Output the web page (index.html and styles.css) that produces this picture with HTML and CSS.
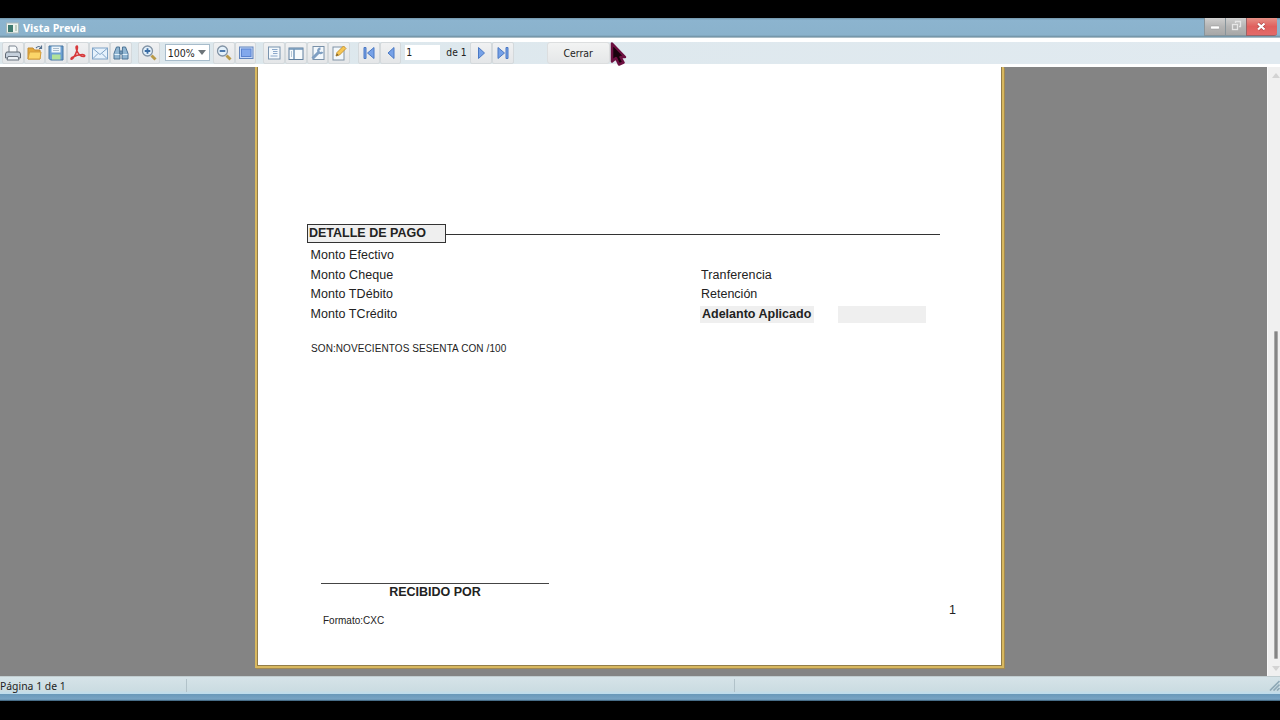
FILE: index.html
```html
<!DOCTYPE html>
<html lang="es">
<head>
    <meta charset="UTF-8">
    <meta name="viewport" content="width=device-width, initial-scale=1.0">
    <link rel="stylesheet" href="styles.css">
    <title>Vista Previa</title>
</head>
<body>
    <div class="window">
        <div class="titlebar">
            <svg class="app-icon" width="13" height="12" viewBox="0 0 13 12">
                <rect x="0.5" y="1" width="12" height="10" fill="#eef3ee" stroke="#a9b9bb"/>
                <rect x="2" y="3" width="5" height="7" fill="#3f7b70"/>
                <path d="M9 4h2M9 6h2M9 8h2" stroke="#8fae97"/>
            </svg>
            <span class="title">Vista Previa</span>
            <div class="controls">
                <div class="control"><svg width="20" height="17"><rect x="5.500" y="8" width="9" height="3" rx="1" fill="#fff" stroke="#8e8e8e" stroke-width=".5"/></svg></div>
                <div class="control"><svg width="20" height="17" fill="none" stroke="#e6e6e6" stroke-width="1.300"><path d="M9.500 5V3.500h5v5H13"/><rect x="6.500" y="6.500" width="5" height="5"/></svg></div>
                <div class="control close"><svg width="30" height="17"><path d="M11 5.500l6.500 6M17.500 5.500l-6.500 6" stroke="#a84040" stroke-width="3.500"/><path d="M11 5.500l6.500 6M17.500 5.500l-6.500 6" stroke="#fff" stroke-width="2.300"/></svg></div>
            </div>
        </div>

        <div class="toolbar">
            <div class="group">
                <!-- print -->
                <div class="btn"><svg width="18" height="18" viewBox="0 0 18 18"><path d="M5 8V2h6.500L13 4v4" fill="#f7fafc" stroke="#7c8590"/><path d="M2.500 8h13l1 2v4h-15v-4z" fill="#c5d0dc" stroke="#5f6873"/><path d="M4 12.500h10l1 3.500H3z" fill="#eef3f8" stroke="#69727e"/></svg></div>
                <!-- open -->
                <div class="btn"><svg width="18" height="18" viewBox="0 0 18 18"><path d="M2 15V4h5l1.500 2H14v9z" fill="#e4a83b" stroke="#c18b35"/><path d="M2 15l1.500-7H15l-1 7z" fill="#fbd568" stroke="#d49d3c"/><path d="M10 4q3-3 5 0M15.500 1.500V4.500H13" fill="none" stroke="#56718e" stroke-width="1.200"/></svg></div>
                <!-- save -->
                <div class="btn"><svg width="18" height="18" viewBox="0 0 18 18"><path d="M2 2h14v14H3.500L2 14.500z" fill="#6da0d2" stroke="#47749f"/><rect x="4.500" y="2.500" width="9" height="6" fill="#eef5fa"/><path d="M6 4.500h6M6 6.500h6" stroke="#a9bbcb"/><rect x="5" y="10.500" width="8.500" height="5" fill="#b1e29b"/></svg></div>
                <!-- pdf -->
                <div class="btn"><svg width="18" height="18" viewBox="0 0 18 18" fill="none" stroke="#d7393b" stroke-width="1.600"><path d="M8 2c-1.500 0-1 3 .5 6s3.500 4.500 6 4.500c2 0 1.500-2-1-2-4 0-8 1.500-10.500 3-2 1.500-.5 3 1.500 0C7 10.500 9.500 3 8 2z"/></svg></div>
                <!-- mail -->
                <div class="btn"><svg width="18" height="18" viewBox="0 0 18 18"><rect x="1.500" y="4" width="15" height="11" fill="#e6f2fc" stroke="#80a4c7"/><path d="M2 4.500l7 6 7-6M2 14.500l5-5M16 14.500l-5-5" fill="none" stroke="#80a4c7"/></svg></div>
                <!-- find -->
                <div class="btn"><svg width="18" height="18" viewBox="0 0 18 18" fill="#91b6d2" stroke="#4c7496"><path d="M4.500 3h3l.5 12H2V9.500zM10.500 3h3L16 9.500V15h-6z"/><path d="M8 7h2v3H8z"/><path d="M2.500 10.500h5M10.500 10.500h5" stroke="#e1f0fa"/></svg></div>
            </div>
            <div class="group zoom">
                <div class="btn"><svg width="18" height="18" viewBox="0 0 18 18"><path d="M11.500 11.500l4 4" stroke="#b99a49" stroke-width="3"/><circle cx="7.500" cy="7" r="5" fill="#e4f1fb" stroke="#8293a5" stroke-width="1.300"/><path d="M4.700 7h5.600M7.500 4.200v5.600" stroke="#3b6da5" stroke-width="1.800"/></svg></div>
                <div class="combo"><span>100%</span><i class="arrow"></i></div>
                <div class="btn"><svg width="18" height="18" viewBox="0 0 18 18"><path d="M11.500 11.500l4 4" stroke="#b99a49" stroke-width="3"/><circle cx="7.500" cy="7" r="5" fill="#e4f1fb" stroke="#8293a5" stroke-width="1.300"/><path d="M4.700 7h5.600" stroke="#3b6da5" stroke-width="1.800"/></svg></div>
                <div class="btn"><svg width="18" height="18" viewBox="0 0 18 18"><rect x="2.500" y="3" width="13.500" height="11.500" fill="#c3d8fa" stroke="#6285bd"/><rect x="4.500" y="5" width="9.500" height="7.500" fill="#82a8ec" stroke="#5c84d0"/></svg></div>
            </div>
            <div class="group views">
                <!-- page layout -->
                <div class="btn"><svg width="18" height="18" viewBox="0 0 18 18"><rect x="3.500" y="3" width="11.500" height="12" fill="#f3f8fc" stroke="#7993ae"/><path d="M7 5.500h5.500M8 7.500h4.500M8 9.500h4.500M5.500 12h7" stroke="#8ca8ca"/></svg></div>
                <!-- outline -->
                <div class="btn"><svg width="18" height="18" viewBox="0 0 18 18"><rect x="2" y="4" width="14" height="11.500" fill="#f7fbfd" stroke="#607f9e"/><path d="M2 5h14M7 5v10" stroke="#6f94b7" stroke-width="1.500"/><path d="M4.500 7v6" stroke="#b4c6d6"/></svg></div>
                <!-- page setup -->
                <div class="btn"><svg width="18" height="18" viewBox="0 0 18 18"><rect x="4" y="2.500" width="11" height="13" fill="#f3f8fc" stroke="#7890a8"/><path d="M3.500 14.500l6-6" stroke="#7f9fc2" stroke-width="3"/><path d="M11.500 4.500a2.300 2.300 0 1 0 2 3.500" fill="none" stroke="#7f9fc2" stroke-width="2.300"/></svg></div>
                <!-- edit page -->
                <div class="btn"><svg width="18" height="18" viewBox="0 0 18 18"><rect x="3" y="3" width="11" height="13" fill="#f3f8fc" stroke="#8193a5"/><path d="M6 12l1-3.500L13.500 2 16 4.500 9.500 11z" fill="#f7c653" stroke="#c99735"/><path d="M6 12l1-2.500 1.500 1.500z" fill="#69573a"/></svg></div>
            </div>
            <div class="group pager">
                <div class="btn"><svg width="18" height="18" viewBox="0 0 18 18" fill="#76a1e7" stroke="#4b79c4"><path d="M4 3.500h2v11H4zM14 3.500v11L7.500 9z"/></svg></div>
                <div class="btn"><svg width="18" height="18" viewBox="0 0 18 18" fill="#76a1e7" stroke="#4b79c4"><path d="M12 3.500v11L6 9z"/></svg></div>
                <div class="page-input">1</div>
                <span class="page-total">de 1</span>
                <div class="btn"><svg width="18" height="18" viewBox="0 0 18 18" fill="#76a1e7" stroke="#4b79c4"><path d="M6.500 3.500v11l6-5.500z"/></svg></div>
                <div class="btn"><svg width="18" height="18" viewBox="0 0 18 18" fill="#76a1e7" stroke="#4b79c4"><path d="M12 3.500h2v11h-2zM4 3.500v11L10.500 9z"/></svg></div>
            </div>
            <div class="cerrar">Cerrar</div>
        </div>

        <div class="viewer">
            <div class="canvas">
                <div class="page">
                    <div class="section-head">
                        <div class="section-title">DETALLE DE PAGO</div>
                        <div class="section-line"></div>
                    </div>
                    <div class="details">
                        <div class="col-left">
                            <div>Monto Efectivo</div>
                            <div>Monto Cheque</div>
                            <div>Monto TDébito</div>
                            <div>Monto TCrédito</div>
                        </div>
                        <div class="col-right">
                            <div class="tranfer">Tranferencia</div>
                            <div>Retención</div>
                            <div class="adelanto">
                                <span class="adelanto-label">Adelanto Aplicado</span>
                                <span class="adelanto-value"></span>
                            </div>
                        </div>
                    </div>
                    <div class="amount-text">SON:NOVECIENTOS SESENTA CON /100</div>
                    <div class="signature">RECIBIDO POR</div>
                    <div class="page-foot">
                        <span class="formato">Formato:CXC</span>
                        <span class="page-number">1</span>
                    </div>
                </div>
            </div>
            <div class="scrollbar">
                <svg width="8" height="7"><path d="M0 6l4-5 4 5z" fill="#d3d3d3"/></svg>
                <div class="thumb"></div>
                <svg width="8" height="7"><path d="M0 1h8L4 6z" fill="#d3d3d3"/></svg>
            </div>
        </div>

        <div class="statusbar">
            <div class="status-page">Página 1 de 1</div>
            <div class="status-mid"></div>
            <svg class="grip" width="11" height="11"><path d="M1 10.500L10.500 1M4.500 10.500l6-6M8 10.500l2.500-2.500" stroke="#8fa9b7" stroke-width="1.700"/></svg>
        </div>
        <div class="frame-bottom"></div>
    </div>

    <svg class="cursor" width="18" height="26" viewBox="0 0 18 26"><path d="M2 1.500v18l4-3.500 3 6.500 4.500-2-3-5.500H15z" fill="#18020c" stroke="#6c1040" stroke-width="2.500" stroke-linejoin="round"/></svg>
</body>
</html>
```
FILE: styles.css
```css
* {
    box-sizing: border-box;
}

body {
    margin: 0;
    height: 720px;
    overflow: hidden;
    background-color: #000;
    font-family: "DejaVu Sans Condensed", "DejaVu Sans", sans-serif;
    font-size: 10px;
    color: #222;
}

svg {
    display: block;
    flex: none;
}

.window {
    display: flex;
    flex-direction: column;
    height: 701px;
    padding-top: 18px;
}

/* title bar */
.titlebar {
    display: flex;
    height: 20px;
    background: linear-gradient(#7093a8, #8cb4cf 2px, #8ab2cc 17px, #6f8e9f);
    border-bottom: 1px solid #a7bac4;
}

.app-icon {
    margin: 4px 4px 0 6px;
}

.title {
    font: bold 10.8px/20px "Noto Sans", sans-serif;
    color: #fff;
}

.controls {
    display: flex;
    height: 18px;
    margin-left: auto;
    margin-right: 3px;
}

.control {
    width: 21px;
    border: 1px solid #87949b;
    border-top: none;
    border-right: none;
    background: linear-gradient(#cfcfcf, #b5b5b5 50%, #a7a7a7);
}

.control.close {
    width: 31px;
    background: linear-gradient(#e69187, #e0605d 50%, #e36a69);
    border-color: #9b6265;
    border-radius: 0 0 3px 0;
}

/* toolbar */
.toolbar {
    display: flex;
    height: 29px;
    padding-left: 2px;
    border-top: 4px solid #fff;
    border-bottom: 3px solid #fff;
    background: linear-gradient(to right, #dce7ec, #e1eaf0);
}

.group {
    display: flex;
}

.btn {
    width: 21.7px;
    height: 22px;
    padding: 1px;
    border: 1px solid #d4d9dc;
    border-radius: 2px;
    background: linear-gradient(#f0f1f2, #e4e6e8);
}

.zoom {
    margin-left: 6px;
}

.combo {
    display: flex;
    align-items: center;
    justify-content: space-between;
    width: 45px;
    height: 17px;
    margin: 2px 3px 0 5px;
    padding: 0 3px 0 2px;
    border: 1px solid #a7bccb;
    background-color: #fff;
    font-size: 10.5px;
}

.arrow {
    border: 4px solid transparent;
    border-top: 5px solid #6c7479;
    border-bottom: none;
}

.views {
    margin-left: 7px;
}

.pager {
    margin-left: 8px;
}

.page-input {
    width: 35px;
    height: 15px;
    margin: 3px 6px 0 4px;
    padding-left: 1px;
    background-color: #fff;
    font-size: 10.5px;
    line-height: 15px;
}

.page-total {
    width: 24px;
    font-size: 10.2px;
    line-height: 21px;
}

.cerrar {
    width: 63px;
    margin-left: 33px;
    border: 1px solid #dcdedf;
    border-radius: 3px;
    background: linear-gradient(#f2f3f3, #e5e7e8);
    font-size: 10.4px;
    line-height: 21px;
    text-align: center;
}

/* report area */
.viewer {
    display: flex;
    height: 609px;
}

.canvas {
    width: 1267px;
    padding-left: 255px;
    background-color: #848484;
}

.page {
    width: 749px;
    height: 601px;
    padding: 157px 0 0 49px;
    border: 2px solid #d8b85f;
    border-top: none;
    box-shadow: inset 1px 0 #937d4a, inset -1px -1px #937d4a, 1px 1px #a38a52;
    background-color: #fff;
    font-family: "Liberation Sans", Arial, sans-serif;
    font-size: 12.5px;
    line-height: 20px;
}

.section-head {
    display: flex;
    width: 633px;
    height: 19px;
    margin-left: 1px;
}

.section-title {
    width: 139px;
    padding-left: 1px;
    border: 1px solid #333;
    background-color: #efefef;
    font-weight: bold;
    line-height: 17px;
}

.section-line {
    flex: 1;
    height: 1px;
    margin-top: 10px;
    background-color: #333;
}

.details {
    display: flex;
    margin-top: 3px;
    line-height: 19.7px;
}

.col-left {
    width: 389.500px;
    margin-left: 4.500px;
    letter-spacing: 0.06px;
}

.tranfer {
    margin-top: 19.7px;
    letter-spacing: 0.1px;
}

.col-right {
    padding-left: 1px;
}

.adelanto {
    display: flex;
    margin: 1px 0 0 -1px;
    font-weight: bold;
    line-height: 17px;
}

.adelanto-label {
    width: 114px;
    margin-right: 24px;
    padding-left: 2px;
    background-color: #efefef;
}

.adelanto-value {
    width: 88px;
    background-color: #efefef;
}

.amount-text {
    margin: 14px 0 0 5px;
    font-size: 10px;
    letter-spacing: 0.09px;
}

.signature {
    width: 228px;
    margin: 224px 0 0 15px;
    border-top: 1px solid #444;
    font-weight: bold;
    line-height: 17px;
    text-align: center;
}

.page-foot {
    display: flex;
    justify-content: space-between;
    width: 650px;
}

.formato {
    margin: 10px 0 0 17px;
    font-size: 10px;
}

.page-number {
    margin-top: -1px;
}

.scrollbar {
    display: flex;
    flex-direction: column;
    align-items: flex-end;
    width: 13px;
    padding: 5px 0 4px;
    border-left: 1px solid #fafafa;
    background-color: #f0f0f0;
}

.thumb {
    width: 4px;
    height: 328px;
    margin: auto 2px 6px 0;
    border: 1px solid #a8a8a8;
    border-radius: 1px;
    background-color: #858585;
}

/* status bar */
.statusbar {
    display: flex;
    align-items: center;
    height: 18px;
    background: linear-gradient(#d6e3e8, #cbdce2 80%, #bddced);
    border-top: 1px solid #c1cdd0;
}

.status-page {
    width: 187px;
    font: 10.4px/17px "Noto Sans", sans-serif;
}

.status-page, .status-mid {
    height: 13px;
    line-height: 15px;
    border-right: 1px solid #b1c2c9;
}

.status-mid {
    width: 548px;
}

.grip {
    margin-left: auto;
}

.frame-bottom {
    height: 7px;
    background: linear-gradient(#6998b9, #79a4c4 75%, #345871);
}

.cursor {
    position: absolute;
    left: 610px;
    top: 42px;
}
```
